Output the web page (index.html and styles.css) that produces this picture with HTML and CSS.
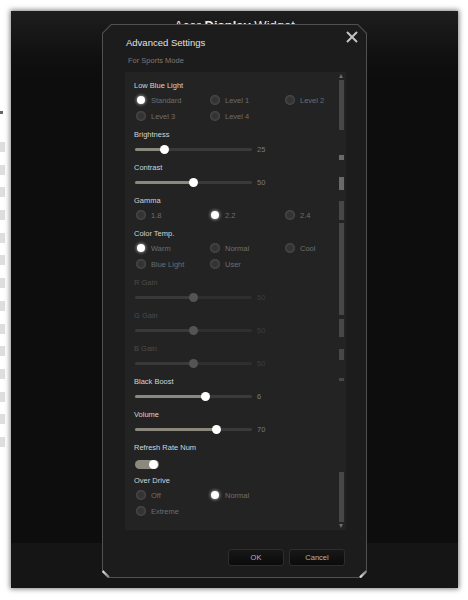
FILE: index.html
```html
<!DOCTYPE html>
<html>

<head>
    <meta charset="utf-8">
    <title>Acer Display Widget - Advanced Settings</title>
    <link rel="stylesheet" href="styles.css">
</head>

<body>
    <div class="behind">
        <span class="behind-mark"></span>
        <span class="behind-item"></span>
        <span class="behind-item"></span>
        <span class="behind-item"></span>
        <span class="behind-item"></span>
        <span class="behind-item"></span>
        <span class="behind-item"></span>
        <span class="behind-item"></span>
        <span class="behind-item"></span>
        <span class="behind-item"></span>
        <span class="behind-item"></span>
        <span class="behind-item"></span>
        <span class="behind-item"></span>
        <span class="behind-item"></span>
        <span class="behind-item"></span>
    </div>

    <div class="window">
        <div class="window-header">Acer <b>Display</b> Widget</div>
        <div class="window-body"></div>
        <div class="window-footer"></div>

        <div class="dialog">
            <div class="dialog-inner">
                <a class="dialog-close">
                    <svg width="12" height="12" viewBox="0 0 12 12">
                        <path d="M1 1 L11 11 M11 1 L1 11" stroke="#c4c4c4" stroke-width="2" fill="none" />
                    </svg>
                </a>
                <h1 class="dialog-title">Advanced Settings</h1>
                <div class="dialog-subtitle">For Sports Mode</div>

                <div class="panel">
                    <div class="settings">
                        <!-- Low Blue Light -->
                        <div class="group">
                            <div class="label">Low Blue Light</div>
                            <div class="radio-row">
                                <span class="option"><i class="dot on"></i>Standard</span>
                                <span class="option"><i class="dot"></i>Level 1</span>
                                <span class="option"><i class="dot"></i>Level 2</span>
                            </div>
                            <div class="radio-row">
                                <span class="option"><i class="dot"></i>Level 3</span>
                                <span class="option"><i class="dot"></i>Level 4</span>
                            </div>
                        </div>

                        <div class="group">
                            <div class="label">Brightness</div>
                            <div class="slider">
                                <div class="track"><div class="fill" style="width: 25%"></div></div>
                                <span class="value">25</span>
                            </div>
                        </div>

                        <div class="group">
                            <div class="label">Contrast</div>
                            <div class="slider">
                                <div class="track"><div class="fill" style="width: 50%"></div></div>
                                <span class="value">50</span>
                            </div>
                        </div>

                        <div class="group">
                            <div class="label">Gamma</div>
                            <div class="radio-row">
                                <span class="option"><i class="dot"></i>1.8</span>
                                <span class="option"><i class="dot on"></i>2.2</span>
                                <span class="option"><i class="dot"></i>2.4</span>
                            </div>
                        </div>

                        <div class="group">
                            <div class="label">Color Temp.</div>
                            <div class="radio-row">
                                <span class="option"><i class="dot on"></i>Warm</span>
                                <span class="option"><i class="dot"></i>Normal</span>
                                <span class="option"><i class="dot"></i>Cool</span>
                            </div>
                            <div class="radio-row">
                                <span class="option"><i class="dot"></i>Blue Light</span>
                                <span class="option"><i class="dot"></i>User</span>
                            </div>
                        </div>

                        <!-- gains are locked unless Color Temp. is User -->
                        <div class="group off">
                            <div class="label">R Gain</div>
                            <div class="slider">
                                <div class="track"><div class="fill" style="width: 50%"></div></div>
                                <span class="value">50</span>
                            </div>
                        </div>

                        <div class="group off">
                            <div class="label">G Gain</div>
                            <div class="slider">
                                <div class="track"><div class="fill" style="width: 50%"></div></div>
                                <span class="value">50</span>
                            </div>
                        </div>

                        <div class="group off">
                            <div class="label">B Gain</div>
                            <div class="slider">
                                <div class="track"><div class="fill" style="width: 50%"></div></div>
                                <span class="value">50</span>
                            </div>
                        </div>

                        <div class="group">
                            <div class="label">Black Boost</div>
                            <div class="slider">
                                <div class="track"><div class="fill" style="width: 60%"></div></div>
                                <span class="value">6</span>
                            </div>
                        </div>

                        <div class="group">
                            <div class="label">Volume</div>
                            <div class="slider">
                                <div class="track"><div class="fill" style="width: 70%"></div></div>
                                <span class="value">70</span>
                            </div>
                        </div>

                        <div class="group group-toggle">
                            <div class="label">Refresh Rate Num</div>
                            <div class="toggle-row">
                                <span class="toggle"><i class="knob"></i></span>
                            </div>
                        </div>

                        <div class="group">
                            <div class="label">Over Drive</div>
                            <div class="radio-row">
                                <span class="option"><i class="dot"></i>Off</span>
                                <span class="option"><i class="dot on"></i>Normal</span>
                            </div>
                            <div class="radio-row">
                                <span class="option"><i class="dot"></i>Extreme</span>
                            </div>
                        </div>
                    </div>

                    <div class="scrollbar">
                        <span class="arrow arrow-up"></span>
                        <span class="piece" style="margin-top: 2px; height: 50px"></span>
                        <span class="piece light" style="margin-top: 25px; height: 5px"></span>
                        <span class="piece light" style="margin-top: 17px; height: 13px"></span>
                        <span class="piece" style="margin-top: 11px; height: 19px"></span>
                        <span class="piece" style="margin-top: 3px; height: 92px"></span>
                        <span class="piece" style="margin-top: 4px; height: 18px"></span>
                        <span class="piece" style="margin-top: 12px; height: 11px"></span>
                        <span class="piece" style="margin-top: 18px; height: 3px"></span>
                        <span class="piece" style="margin-top: 91px; height: 50px"></span>
                        <span class="arrow arrow-down"></span>
                    </div>
                </div>

                <div class="buttons">
                    <button class="btn">OK</button>
                    <button class="btn">Cancel</button>
                </div>
            </div>
            <span class="corner corner-left"></span>
            <span class="corner corner-right"></span>
        </div>
    </div>
</body>

</html>
```

FILE: styles.css
```css
* {
    box-sizing: border-box;
    font-family: "Liberation Sans", Arial, sans-serif;
}

body {
    margin: 0;
    height: 600px;
    display: flex;
    overflow: hidden;
    background-color: #ffffff;
}

/* bits of the app behind the widget window */
.behind {
    width: 11px;
    display: flex;
    flex-direction: column;
    padding-top: 111px;
}

.behind-mark {
    width: 3px;
    height: 3px;
    margin-bottom: 28px;
    background-color: #666;
}

.behind-item {
    width: 5px;
    height: 10px;
    margin-bottom: 12.7px;
    background-color: #dedede;
}

.window {
    position: relative;
    width: 447px;
    height: 577px;
    margin-top: 11px;
    display: flex;
    flex-direction: column;
    background: linear-gradient(#1e1e1e 0, #101010 45px, #0d0d0d 70px);
    box-shadow: 0 0 5px 1px rgba(0, 0, 0, 0.5);
}

.window-header {
    height: 40px;
    padding-top: 7px;
    text-align: center;
    font-size: 13px;
    line-height: 16px;
    color: #ececec;
}

.window-body {
    flex-grow: 1;
}

.window-footer {
    height: 45px;
    background-color: #151515;
}

.dialog {
    position: absolute;
    left: 91px;
    top: 13px;
    width: 265px;
    height: 554px;
    padding: 1px;
    background-color: #505050;
    clip-path: polygon(9px 0, calc(100% - 9px) 0, 100% 9px, 100% calc(100% - 6px), calc(100% - 6px) 100%, 6px 100%, 0 calc(100% - 6px), 0 9px);
}

.dialog-inner {
    position: relative;
    height: 100%;
    padding: 11px 0 0 0;
    display: flex;
    flex-direction: column;
    background-color: #1c1c1c;
    clip-path: polygon(8.5px 0, calc(100% - 8.5px) 0, 100% 8.5px, 100% calc(100% - 5.5px), calc(100% - 5.5px) 100%, 5.5px 100%, 0 calc(100% - 5.5px), 0 8.5px);
}

.dialog-close {
    position: absolute;
    top: 6px;
    right: 8px;
    width: 12px;
    height: 12px;
}

.dialog-close svg {
    display: block;
}

.dialog-title {
    margin: 0;
    padding-left: 23px;
    font-size: 9.5px;
    font-weight: 400;
    line-height: 14px;
    color: #e0e0e0;
}

.dialog-subtitle {
    margin-top: 5px;
    padding-left: 25px;
    font-size: 7.5px;
    line-height: 12px;
    color: #7a7a7a;
}

.panel {
    display: flex;
    width: 221px;
    height: 458px;
    margin: 5px 0 0 22px;
    background-color: #232323;
}

.settings {
    flex-grow: 1;
    padding: 7px 0 0 9px;
}

.group {
    margin-bottom: 4px;
}

.group-toggle {
    margin-top: 1px;
    margin-bottom: 2px;
}

.label {
    height: 13px;
    font-size: 7.5px;
    line-height: 13px;
    color: #d4d4d4;
}

.radio-row {
    display: grid;
    grid-template-columns: 74px 75px auto;
    align-items: center;
    height: 16px;
    padding-left: 2px;
}

.option {
    display: flex;
    align-items: center;
    font-size: 7.5px;
    color: #6e6e6e;
}

.dot {
    width: 10px;
    height: 10px;
    margin-right: 5px;
    border-radius: 50%;
    background: radial-gradient(circle, #333 0, #333 2.5px, #3d3d3d 3.5px);
    box-shadow: inset 0 0 0 1px #454545;
}

.dot.on {
    width: 8px;
    height: 8px;
    margin: 0 6px 0 1px;
    background: #ffffff;
    box-shadow: 0 0 3px 1px rgba(255, 255, 255, 0.45);
}

.slider {
    display: flex;
    align-items: center;
    height: 16px;
}

.track {
    width: 117px;
    height: 3px;
    margin-left: 1px;
    border-radius: 2px;
    background-color: #3a3a3a;
}

.fill {
    position: relative;
    height: 100%;
    border-radius: 2px;
    background-color: #8b897d;
}

.fill::after {
    content: "";
    position: absolute;
    right: -4.5px;
    top: -3px;
    width: 9px;
    height: 9px;
    border-radius: 50%;
    background-color: #ffffff;
}

.value {
    margin-left: 5px;
    font-size: 7.5px;
    color: #7a7a7a;
}

.off .label {
    color: #4c4c4c;
}

.off .track {
    background-color: #2f2f2f;
}

.off .fill {
    background-color: #393939;
}

.off .fill::after {
    background-color: #545454;
}

.off .value {
    color: #3c3c3c;
}

.toggle-row {
    display: flex;
    align-items: center;
    height: 16px;
    margin-top: 2px;
}

.toggle {
    display: flex;
    justify-content: flex-end;
    align-items: center;
    width: 24px;
    height: 9px;
    margin-left: 1px;
    border-radius: 5px;
    background-color: #8b897d;
}

.knob {
    width: 9px;
    height: 9px;
    margin-right: 1px;
    border-radius: 50%;
    background-color: #ffffff;
}

.scrollbar {
    display: flex;
    flex-direction: column;
    align-items: center;
    width: 6px;
    margin-right: 2px;
    padding-top: 2px;
}

.piece {
    width: 5px;
    background-color: #474747;
}

.piece.light {
    background-color: #6a6a6a;
}

.arrow {
    width: 0;
    height: 0;
    border-left: 2px solid transparent;
    border-right: 2px solid transparent;
}

.arrow-up {
    border-bottom: 4px solid #6c6c6c;
}

.arrow-down {
    margin-top: 2px;
    border-top: 4px solid #6c6c6c;
}

.buttons {
    display: flex;
    justify-content: flex-end;
    gap: 5px;
    margin-top: 19px;
    padding-right: 21px;
}

.btn {
    width: 56px;
    height: 17px;
    padding: 0;
    border: 1px solid #2d2d2d;
    border-radius: 3px;
    background: linear-gradient(#171717, #0b0b0b);
    font-size: 7.5px;
    color: #b4b4b4;
}

/* bright bevel on the lower corners */
.corner {
    position: absolute;
    bottom: 2px;
    width: 9px;
    height: 3px;
    background: linear-gradient(90deg, #e8e8e8, #777);
}

.corner-left {
    left: -1px;
    transform: rotate(45deg);
}

.corner-right {
    right: -1px;
    transform: rotate(-45deg);
}
```
